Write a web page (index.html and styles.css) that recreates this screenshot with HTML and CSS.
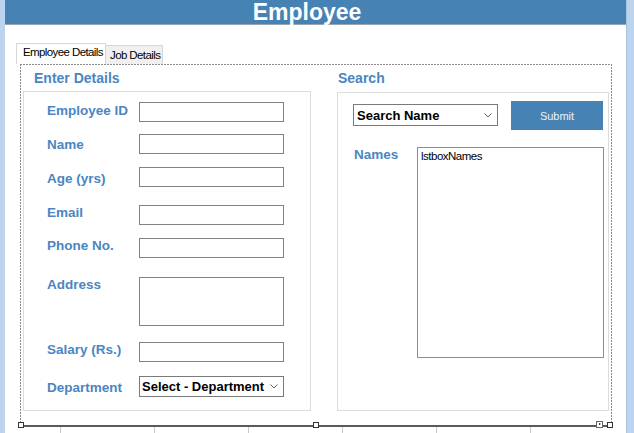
FILE: index.html
```html
<!DOCTYPE html>
<html>
<head>
<meta charset="utf-8">
<title>Employee</title>
<link rel="stylesheet" href="styles.css">
</head>
<body>
<div class="window">
  <div class="edge edge-left"></div>
  <div class="form">
    <div class="header">Employee</div>
    <div class="tabs">
      <div class="tab tab-active">Employee Details</div>
      <div class="tab tab-job">Job Details</div>
    </div>
    <div class="page">
      <section class="col col-left">
        <h2 class="group-title">Enter Details</h2>
        <div class="group group-details">
          <div class="field f1"><span class="label">Employee ID</span><span class="input"></span></div>
          <div class="field f2"><span class="label">Name</span><span class="input"></span></div>
          <div class="field f3"><span class="label">Age (yrs)</span><span class="input"></span></div>
          <div class="field f4"><span class="label">Email</span><span class="input"></span></div>
          <div class="field f5"><span class="label">Phone No.</span><span class="input"></span></div>
          <div class="field f6"><span class="label">Address</span><span class="input input-multi"></span></div>
          <div class="field f7"><span class="label">Salary (Rs.)</span><span class="input"></span></div>
          <div class="field f8"><span class="label">Department</span>
            <span class="combo combo-dept"><span>Select - Department</span>
              <svg class="chev" width="8" height="5" viewBox="0 0 8 5"><path d="M0.5 0.5 L4 4 L7.5 0.5" fill="none" stroke="#606060" stroke-width="1"/></svg>
            </span>
          </div>
        </div>
      </section>
      <section class="col col-right">
        <h2 class="group-title">Search</h2>
        <div class="group group-search">
          <div class="search-row">
            <span class="combo combo-search"><span>Search Name</span>
              <svg class="chev" width="8" height="5" viewBox="0 0 8 5"><path d="M0.5 0.5 L4 4 L7.5 0.5" fill="none" stroke="#606060" stroke-width="1"/></svg>
            </span>
            <span class="submit">Submit</span>
          </div>
          <div class="names-row">
            <span class="label names-label">Names</span>
            <div class="listbox">lstboxNames</div>
          </div>
        </div>
      </section>
    </div>
    <div class="resize-bar">
      <span class="handle h-left"></span>
      <span class="handle h-mid"></span>
      <span class="smart-tag"></span>
      <span class="handle h-right"></span>
    </div>
    <div class="grid-strip">
      <span class="cell cell-first"></span>
      <span class="cell"></span>
      <span class="cell"></span>
      <span class="cell"></span>
      <span class="cell"></span>
      <span class="cell"></span>
    </div>
  </div>
  <div class="edge edge-right"></div>
</div>
</body>
</html>
```

FILE: styles.css
```css
html, body {
  margin: 0;
  padding: 0;
}
body {
  width: 634px;
  height: 433px;
  overflow: hidden;
  background: #ffffff;
  font-family: "Liberation Sans", Arial, sans-serif;
}
.window {
  display: flex;
  height: 433px;
}
.edge {
  background: #bcd4ee;
}
.edge-left {
  width: 5px;
}
.edge-right {
  flex: 1;
  border-left: 1px solid #a9c2dd;
}
.form {
  width: 621px;
  background: #ffffff;
}
.header {
  height: 24px;
  border-bottom: 1px solid #9aa5b0;
  background: #4682b4;
  color: #ffffff;
  font-weight: bold;
  font-size: 23px;
  line-height: 24px;
  text-align: center;
  padding-right: 17px;
}
.tabs {
  display: flex;
  align-items: flex-end;
  height: 21px;
  margin: 18px 0 0 11px;
}
.tab {
  box-sizing: border-box;
  font-size: 11.5px;
  letter-spacing: -0.6px;
  color: #000000;
  border: 1px solid #d6d6d6;
  border-bottom: none;
  white-space: nowrap;
}
.tab-active {
  width: 90px;
  height: 21px;
  background: #ffffff;
  padding-left: 6px;
  line-height: 17px;
}
.tab-job {
  width: 57px;
  height: 19px;
  border-left: none;
  background: #f0f0f0;
  padding-left: 4px;
  line-height: 18px;
}
.page {
  box-sizing: border-box;
  width: 592px;
  height: 361px;
  margin-left: 15px;
  padding: 6px 0 0 3px;
  display: flex;
  gap: 26px;
  background:
    repeating-linear-gradient(90deg, #8c8c8c 0 2px, transparent 2px 3px) top left / 100% 1px no-repeat,
    repeating-linear-gradient(180deg, #8c8c8c 0 2px, transparent 2px 3px) top left / 1px 100% no-repeat,
    repeating-linear-gradient(180deg, #8c8c8c 0 2px, transparent 2px 3px) top right / 1px 100% no-repeat;
}
.col-left {
  width: 288px;
}
.col-right {
  width: 272px;
}
.group-title {
  margin: 0;
  font-size: 14px;
  font-weight: bold;
  line-height: 16px;
  color: #4a86c2;
}
.col-left .group-title {
  padding-left: 11px;
}
.col-right .group-title {
  padding-left: 1px;
}
.group {
  box-sizing: border-box;
  border: 1px solid #dcdcdc;
}
.group-details {
  height: 320px;
  margin-top: 5px;
  padding-left: 23px;
}
.group-search {
  height: 319px;
  margin-top: 6px;
}
.field {
  display: flex;
  align-items: flex-start;
}
.label {
  width: 92px;
  font-size: 13.5px;
  font-weight: bold;
  line-height: 16px;
  color: #4a86c2;
  white-space: nowrap;
}
.input {
  box-sizing: border-box;
  width: 145px;
  height: 20px;
  border: 1px solid #828282;
  background: #ffffff;
}
.input-multi {
  height: 49px;
}
.f1 { margin-top: 10px; }
.f2 { margin-top: 12px; }
.f3 { margin-top: 13px; }
.f4 { margin-top: 18px; }
.f5 { margin-top: 13px; }
.f6 { margin-top: 19px; }
.f7 { margin-top: 16px; }
.f8 { margin-top: 14px; }
.f1 .label { margin-top: 1px; }
.f2 .label { margin-top: 3px; }
.f3 .label { margin-top: 4px; }
.f8 .label { margin-top: 4px; }
.combo {
  box-sizing: border-box;
  display: flex;
  align-items: center;
  justify-content: space-between;
  width: 145px;
  border: 1px solid #7a7a7a;
  background: #ffffff;
  font-size: 13px;
  font-weight: bold;
  color: #000000;
  white-space: nowrap;
}
.combo-dept {
  height: 21px;
  padding: 0 5px 0 2px;
}
.combo-search {
  height: 22px;
  margin-top: 11px;
  padding: 0 5px 0 3px;
}
.chev {
  display: block;
  flex: none;
}
.search-row {
  display: flex;
  align-items: flex-start;
  padding-left: 15px;
}
.submit {
  box-sizing: border-box;
  display: flex;
  align-items: center;
  justify-content: center;
  width: 92px;
  height: 29px;
  margin: 8px 0 0 13px;
  background: #4682b4;
  color: #eef3f8;
  font-size: 11px;
}
.names-row {
  display: flex;
  align-items: flex-start;
  margin-top: 17px;
  padding-left: 16px;
}
.names-label {
  width: 63px;
}
.listbox {
  box-sizing: border-box;
  width: 187px;
  height: 211px;
  border: 1px solid #8a8e99;
  padding: 2px 0 0 3px;
  font-size: 11.5px;
  line-height: 13px;
  letter-spacing: -0.5px;
  color: #000000;
}
.resize-bar {
  position: relative;
  width: 592px;
  height: 2px;
  margin-left: 15px;
  background: #5a5a5a;
}
.handle {
  position: absolute;
  top: -3px;
  width: 4px;
  height: 4px;
  background: #ffffff;
  border: 1px solid #333333;
}
.h-left { left: -2px; }
.h-mid { left: 293px; }
.h-right { left: 587px; }
.smart-tag {
  position: absolute;
  left: 576px;
  top: -4px;
  width: 5px;
  height: 5px;
  border: 1px solid #666666;
  background: #ffffff;
}
.smart-tag::after {
  content: "";
  position: absolute;
  left: 2px;
  top: 1px;
  border-left: 2px solid #000000;
  border-top: 1.5px solid transparent;
  border-bottom: 1.5px solid transparent;
}
.grid-strip {
  display: flex;
  height: 6px;
}
.cell {
  width: 93px;
  border-right: 1px solid #c8c8c8;
}
.cell-first {
  width: 55px;
}
```
